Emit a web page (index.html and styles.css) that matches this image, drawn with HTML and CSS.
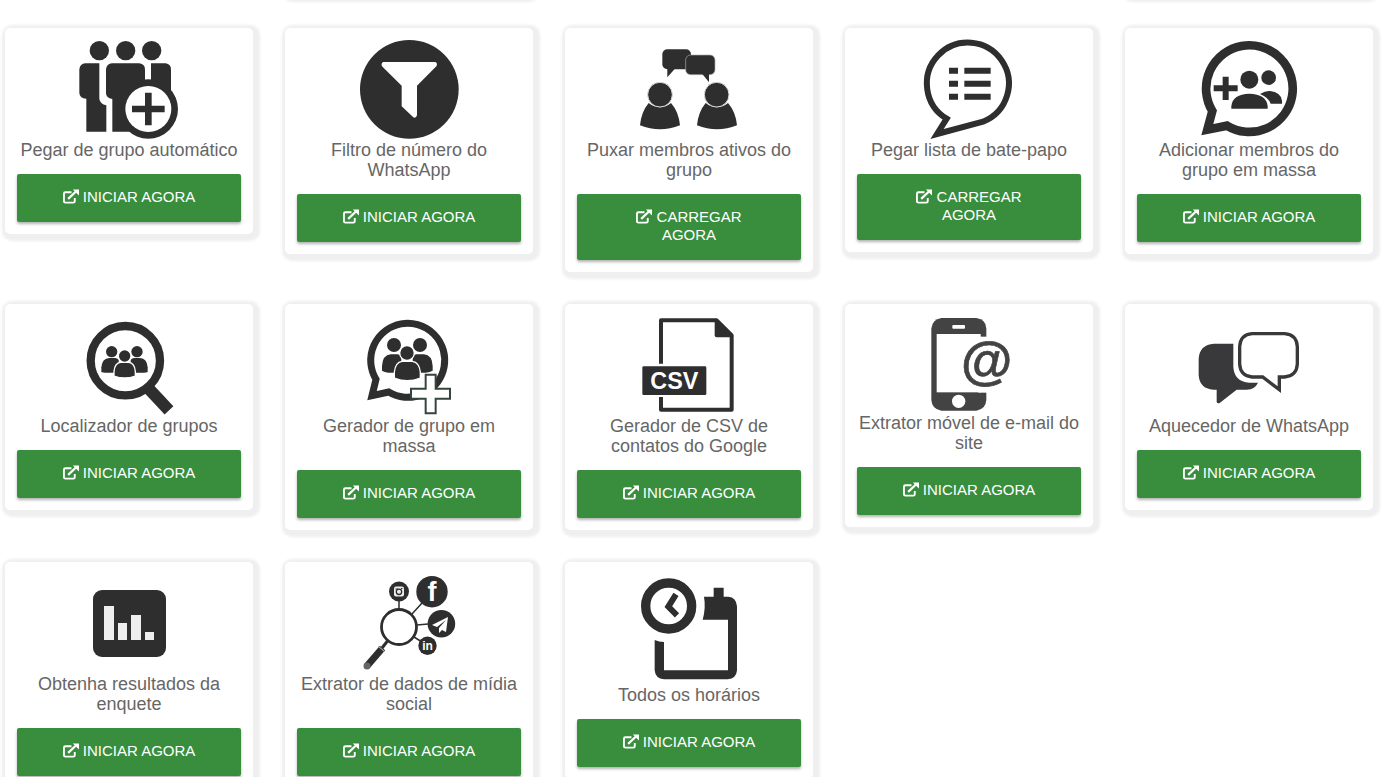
FILE: index.html
```html
<!DOCTYPE html>
<html lang="pt-BR">

<head>
  <meta charset="UTF-8">
  <meta name="viewport" content="width=device-width, initial-scale=1.0">
  <title>Ferramentas</title>
  <link rel="stylesheet" href="styles.css">
</head>

<body>
  <svg class="sprite" aria-hidden="true">
    <symbol id="open" viewBox="0 0 17 15">
      <path d="M9 3H2.500Q1 3 1 4.500V12.500Q1 14 2.500 14H11Q12.500 14 12.500 12.500V9" fill="none" stroke="currentColor" stroke-width="2" />
      <path d="M5.500 10L13.500 2.500" stroke="currentColor" stroke-width="2.400" />
      <path d="M10.500 0H17V6.500Z" fill="currentColor" />
    </symbol>
  </svg>

  <!-- fim da fileira anterior -->
  <div class="grid grid-tail">
    <div></div>
    <div class="card"></div>
    <div></div>
    <div></div>
    <div class="card"></div>
  </div>

  <main class="grid">
    <div class="card">
      <svg class="icon" viewBox="237 120 300 300">
        <circle cx="298" cy="152" r="29" />
        <circle cx="377" cy="152" r="29" />
        <circle cx="455" cy="152" r="29" />
        <path d="M256 190H298V296Q300 312 319 316V395H259V296Q238 294 238 278V208Q240 191 256 190Z" />
        <path d="M336 190H418Q435 192 435 209V395H337V297Q318 294 318 280V208Q320 191 336 190Z" />
        <path d="M453 190H497Q513 192 513 209V300H453Z" />
        <circle cx="445" cy="327" r="89" />
        <circle class="paper" cx="445" cy="327" r="69" />
        <path d="M396 317H435V278H455V317H494V337H455V376H435V337H396Z" />
      </svg>
      <h2>Pegar de grupo automático</h2>
      <button type="button" class="btn"><svg class="open"><use href="#open" /></svg> INICIAR AGORA</button>
    </div>

    <div class="card">
      <svg class="icon" viewBox="237 120 300 300">
        <circle cx="388" cy="268" r="148" />
        <path class="paper" d="M310 186H466Q474 190 469 199L411 257V346Q408 356 400 352L365 319V257L306 199Q302 190 310 186Z" />
      </svg>
      <h2>Filtro de número do WhatsApp</h2>
      <button type="button" class="btn"><svg class="open"><use href="#open" /></svg> INICIAR AGORA</button>
    </div>

    <div class="card">
      <svg class="icon" viewBox="237 120 300 300">
        <rect x="307" y="148" width="86" height="60" rx="15" />
        <path d="M322 200V232L346 205Z" />
        <rect x="377" y="165" width="88" height="59" rx="15" stroke="#aaa" stroke-width="2" />
        <path d="M427 222L447 247V218Z" />
        <path d="M266 309Q244 335 240 376Q300 400 360 376Q356 335 333 309Q300 335 266 309Z" />
        <circle cx="300" cy="284" r="37" stroke="#ddd" stroke-width="3" />
        <path d="M437 309Q415 335 411 376Q471 400 531 376Q527 335 504 309Q471 335 437 309Z" />
        <circle cx="470" cy="284" r="37" stroke="#ddd" stroke-width="3" />
      </svg>
      <h2>Puxar membros ativos do grupo</h2>
      <button type="button" class="btn"><svg class="open"><use href="#open" /></svg> CARREGAR AGORA</button>
    </div>

    <div class="card">
      <svg class="icon" viewBox="237 120 300 300">
        <path class="line" d="M320 356A123 123 0 1 1 429 365L291 402Z" stroke-width="18" />
        <path d="M327 203h27v18h-27zM373 203h79v18h-79zM327 242h27v18h-27zM373 242h79v18h-79zM327 281h27v18h-27zM373 281h79v18h-79z" />
      </svg>
      <h2>Pegar lista de bate-papo</h2>
      <button type="button" class="btn"><svg class="open"><use href="#open" /></svg> CARREGAR AGORA</button>
    </div>

    <div class="card">
      <svg class="icon" viewBox="237 120 300 300">
        <path class="line" d="M277 333A130 130 0 1 1 321 377L262 389Z" stroke-width="26" />
        <path d="M281 256H308V230H326V256H353V274H326V300H308V274H281Z" />
        <circle cx="388" cy="239" r="27" />
        <circle cx="446" cy="233" r="22" />
        <path d="M334 326V318Q338 282 388 281Q439 282 443 318V326Z" />
        <path d="M420 282Q436 272 450 273Q482 276 486 302V311H452Q446 293 420 282Z" />
      </svg>
      <h2>Adicionar membros do grupo em massa</h2>
      <button type="button" class="btn"><svg class="open"><use href="#open" /></svg> INICIAR AGORA</button>
    </div>

    <div class="card">
      <svg class="icon" viewBox="237 78 300 300">
        <circle class="line" cx="376" cy="212" r="104" stroke-width="25" />
        <path class="line" d="M446 296L507 361" stroke-width="36" />
        <circle cx="335" cy="185" r="17" />
        <circle cx="411" cy="185" r="17" />
        <path d="M304 246V232Q306 205 328 204H345Q352 205 356 209V248H316Q308 248 304 246Z" />
        <path d="M443 246V232Q441 205 420 204H403Q396 205 392 209V248H431Q439 248 443 246Z" />
        <path class="halo" d="M342 258V244Q344 219 362 217H386Q404 219 406 244V258Q374 270 342 258Z" />
        <circle class="halo" cx="374" cy="198" r="19" />
      </svg>
      <h2>Localizador de grupos</h2>
      <button type="button" class="btn"><svg class="open"><use href="#open" /></svg> INICIAR AGORA</button>
    </div>

    <div class="card">
      <svg class="icon" viewBox="237 78 300 300">
        <path class="line" d="M288 268A111 111 0 1 1 326 306L276 317Z" stroke-width="21" />
        <circle cx="342" cy="165" r="21" />
        <circle cx="420" cy="165" r="21" />
        <path d="M306 242V228Q308 195 332 193H352Q360 194 364 198V248H325Q313 247 306 242Z" />
        <path d="M458 242V228Q456 195 432 193H410Q402 194 398 198V248H437Q450 247 458 242Z" />
        <path class="halo" d="M343 264V246Q346 217 366 214H397Q418 217 421 246V264Q382 280 343 264Z" />
        <circle class="halo" cx="381" cy="189" r="22" />
        <path d="M437 254H467V296H510V326H467V370H437V326H393V296H437Z" fill="#fff" stroke="#34453b" stroke-width="6" />
      </svg>
      <h2>Gerador de grupo em massa</h2>
      <button type="button" class="btn"><svg class="open"><use href="#open" /></svg> INICIAR AGORA</button>
    </div>

    <div class="card">
      <svg class="icon" viewBox="237 78 300 300">
        <path class="line" d="M303 221V91H470L515 136V359H303V321" stroke-width="12" stroke-linejoin="round" />
        <path d="M464 88H473L519 133V142H470Q464 142 464 136Z" />
        <rect x="247" y="229" width="192" height="86" rx="4" />
        <text class="paper" x="343" y="297" font-size="70">CSV</text>
      </svg>
      <h2>Gerador de CSV de contatos do Google</h2>
      <button type="button" class="btn"><svg class="open"><use href="#open" /></svg> INICIAR AGORA</button>
    </div>

    <div class="card">
      <svg class="icon icon-phone" viewBox="237 78 300 291">
        <path d="M304 84H409Q439 88 439 116V330Q437 358 409 362H304Q276 358 274 330V116Q276 88 304 84Z" />
        <rect class="paper" x="290" y="132" width="132" height="175" />
        <path class="paper" d="M415 140H445V308H415Z" />
        <circle class="paper" cx="440" cy="224" r="82" />
        <rect class="paper" x="337" y="105" width="38" height="11" rx="3" />
        <circle class="paper" cx="356" cy="334" r="20" />
        <text class="at" x="440" y="266" font-size="158">@</text>
      </svg>
      <h2>Extrator móvel de e-mail do site</h2>
      <button type="button" class="btn"><svg class="open"><use href="#open" /></svg> INICIAR AGORA</button>
    </div>

    <div class="card">
      <svg class="icon icon-chat" viewBox="237 78 300 300">
        <path d="M340 161H282Q238 164 236 207V255Q238 296 280 299H290V336Q293 343 300 338L350 299H380Q405 298 414 278H388Q342 274 340 230Z" />
        <path class="line" d="M396 131H494Q530 134 532 170V222Q530 258 494 261H478V299L428 261H396Q361 258 359 222V170Q361 134 396 131Z" stroke-width="10" />
      </svg>
      <h2>Aquecedor de WhatsApp</h2>
      <button type="button" class="btn"><svg class="open"><use href="#open" /></svg> INICIAR AGORA</button>
    </div>

    <div class="card">
      <svg class="icon" viewBox="0 0 100 100">
        <rect x="14" y="16" width="73" height="67" rx="9" />
        <path d="M25 32h10v34h-10zM39 49h9v17h-9zM52 41h10v25h-10zM66 58h9v8h-9z" fill="#eee" />
      </svg>
      <h2>Obtenha resultados da enquete</h2>
      <button type="button" class="btn"><svg class="open"><use href="#open" /></svg> INICIAR AGORA</button>
    </div>

    <div class="card">
      <svg class="icon" viewBox="0 0 100 100">
        <path class="line" d="M40 26V35M63 29L53 40M58 51L69 50M55 63L63 68" stroke-width="1.500" />
        <circle class="line" cx="40" cy="53" r="17.500" stroke-width="2.800" />
        <path class="line" d="M28.500 67L23 74" stroke-width="3" />
        <path class="line" d="M23.500 74L8 92" stroke-width="7" />
        <path d="M19 72L26 78" stroke="#ccc" stroke-width="1" />
        <circle cx="8" cy="92" r="3.500" fill="#666" />
        <circle cx="40" cy="17.500" r="10" />
        <rect x="35" y="12.500" width="10" height="10" rx="2" fill="#eee" />
        <circle cx="40" cy="17.800" r="2.700" fill="#eee" stroke="#2e2e2e" stroke-width="1.300" />
        <path d="M36.500 15H39M42 14.500H43.500" stroke="#2e2e2e" stroke-width="1.200" />
        <circle cx="73" cy="17.700" r="15.700" />
        <text class="paper" x="73" y="27" font-size="27">f</text>
        <circle cx="82.400" cy="49.700" r="13.800" />
        <path class="paper" d="M89 43L73 51L78 53L87 46L80 54V59L83 56L87 58Z" />
        <circle cx="68.500" cy="71.700" r="9.200" />
        <text class="paper" x="68.500" y="76" font-size="12">in</text>
      </svg>
      <h2>Extrator de dados de mídia social</h2>
      <button type="button" class="btn"><svg class="open"><use href="#open" /></svg> INICIAR AGORA</button>
    </div>

    <div class="card">
      <svg class="icon icon-schedule" viewBox="237 81 300 333">
        <circle class="line" cx="326" cy="177" r="69" stroke-width="28" />
        <path class="line" d="M348 142L325 179L351 205" stroke-width="18" />
        <path d="M432 149H461V122H491V149H505Q529 151 531 178V370Q529 395 503 397H312Q286 395 284 370V279Q297 285 312 285V370H504V218H428Q438 182 432 149Z" />
      </svg>
      <h2>Todos os horários</h2>
      <button type="button" class="btn"><svg class="open"><use href="#open" /></svg> INICIAR AGORA</button>
    </div>
  </main>
</body>

</html>
```
FILE: styles.css
```css
body {
  margin: 0;
  font-family: "Liberation Sans", Arial, sans-serif;
  background-color: #fff;
  color: #666;
}

.sprite {
  display: none;
}

.grid {
  display: grid;
  grid-template-columns: repeat(5, minmax(0, 1fr));
  gap: 32px;
  align-items: start;
  padding: 0 27px 32px 5px;
}

.grid-tail {
  height: 28px;
  padding-bottom: 0;
  overflow: hidden;
}

.grid-tail .card {
  margin-top: -29px;
}

.card {
  padding: 12px;
  border-radius: 5px;
  background-color: #fff;
  box-shadow: 2px 2px 3px 5px #efefef;
  text-align: center;
}

.card h2 {
  margin: 0 0 14px;
  font-size: 18px;
  font-weight: normal;
  line-height: 20px;
}

.icon {
  display: block;
  width: 100px;
  height: 100px;
  margin: 0 auto;
  overflow: visible;
  fill: #2e2e2e;
}

.icon-phone {
  height: 97px;
  fill: #434343;
}

.icon-schedule {
  height: 111px;
}

.icon-chat {
  fill: #39393b;
}

.icon .paper {
  fill: #fff;
}

.icon .line {
  fill: none;
  stroke: #2e2e2e;
}

.icon-chat .line {
  stroke: #39393b;
}

.icon .halo {
  stroke: #fff;
  stroke-width: 4px;
}

.icon text {
  font-weight: bold;
  text-anchor: middle;
}

.icon .at {
  stroke: #434343;
  stroke-width: 2px;
}

.btn {
  display: block;
  width: 100%;
  padding: 14px 38px 16px;
  border: none;
  border-radius: 2px;
  background-color: #388e3c;
  box-shadow: 0 2px 3px rgba(0, 0, 0, 0.3);
  color: #fff;
  font-family: inherit;
  font-size: 15px;
  line-height: 18px;
  cursor: pointer;
}

.btn:hover {
  background-color: #2e7d32;
}

.open {
  width: 16px;
  height: 15px;
  vertical-align: -2px;
}
```
